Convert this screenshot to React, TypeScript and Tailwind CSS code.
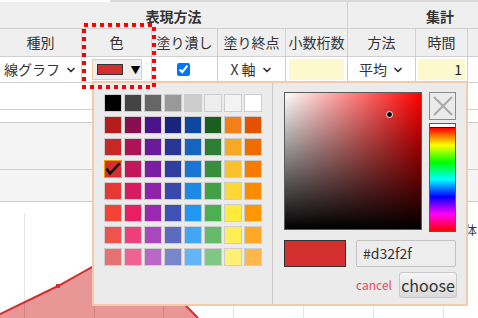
import { ChevronDown } from 'lucide-react'

const palette = [
  ['#000000', '#444444', '#666666', '#999999', '#cccccc', '#eeeeee', '#f3f3f3', '#ffffff'],
  ['#b71c1c', '#880e4f', '#4a148c', '#1a237e', '#0d47a1', '#1b5e20', '#f57f17', '#e65100'],
  ['#c62828', '#ad1457', '#6a1b9a', '#283593', '#1565c0', '#2e7d32', '#f9a825', '#ef6c00'],
  ['#d32f2f', '#c2185b', '#7b1fa2', '#303f9f', '#1976d2', '#388e3c', '#fbc02d', '#f57c00'],
  ['#e53935', '#d81b60', '#8e24aa', '#3949ab', '#1e88e5', '#43a047', '#fdd835', '#fb8c00'],
  ['#f44336', '#e91e63', '#9c27b0', '#3f51b5', '#2196f3', '#4caf50', '#ffeb3b', '#ff9800'],
  ['#ef5350', '#ec407a', '#ab47bc', '#5c6bc0', '#42a5f5', '#66bb6a', '#ffee58', '#ffa726'],
  ['#e57373', '#f06292', '#ba68c8', '#7986cb', '#64b5f6', '#81c784', '#fff176', '#ffb74d'],
]

const selected = '#d32f2f'

function SelectText({ label }: { label: string }) {
  return (
    <span className="flex items-center gap-[5px]">
      {label}
      <ChevronDown size={12} strokeWidth={3.5} />
    </span>
  )
}

function ColorPopup() {
  return (
    <div className="absolute left-[92px] top-[81px] w-[376px] h-[225px] border-2 border-[#f2ccaa] bg-[#ebebeb] flex">
      <div className="w-[179px] border-r border-[#c9c9c9] pl-[10px] pt-[11px]">
        <div className="grid grid-cols-[repeat(8,18px)] gap-x-[2px] gap-y-[4px]">
          {palette.flat().map((c, i) => {
            const isSel = c === selected && i > 8
            return (
              <div
                key={i}
                className={isSel ? 'w-[18px] h-[18px] border border-[#f5a000] relative' : 'w-[18px] h-[18px] border border-[#cdcdcd]'}
                style={{ backgroundColor: c }}
              >
                {isSel && (
                  <svg className="absolute inset-0" width="16" height="16" viewBox="0 0 16 16">
                    <path d="M1.5 7.5 L5 12.5 L14.5 2.5" fill="none" stroke="#000" strokeWidth="2.4" />
                  </svg>
                )}
              </div>
            )
          })}
        </div>
      </div>
      <div className="flex-1 pl-[11px] pt-[9px] flex flex-col">
        <div className="flex gap-[7px]">
          <div className="relative w-[138px] h-[138px] border border-[#5a5a5a] bg-[#ff0000]">
            <div className="absolute inset-0 bg-linear-to-r from-white to-white/0" />
            <div className="absolute inset-0 bg-linear-to-t from-black to-black/0" />
            <div className="absolute left-[101px] top-[18px] w-[7px] h-[7px] rounded-full bg-black border border-white" />
          </div>
          <div className="flex flex-col gap-[3px]">
            <div className="w-[27px] h-[28px] border border-[#8a8a8a] flex items-center justify-center">
              <svg width="22" height="22" viewBox="0 0 22 22">
                <path d="M2 2 L20 20 M20 2 L2 20" stroke="#a8a8a8" strokeWidth="2" />
              </svg>
            </div>
            <div className="w-[27px] h-[109px] border border-[#5a5a5a] flex flex-col">
              <div className="h-[4px] bg-white border-b border-[#222]" />
              <div className="flex-1 bg-[linear-gradient(to_bottom,#ff0000,#ffff00,#00ff00,#00ffff,#0000ff,#ff00ff,#ff0000)]" />
            </div>
          </div>
        </div>
        <div className="flex gap-[10px] mt-[8px]">
          <div className="w-[62px] h-[27px] bg-[#d32f2f] border border-[#333]" />
          <div className="w-[100px] h-[27px] border border-[#c2c2c2] rounded-[2px] bg-[#ededed] flex items-center pl-[6px] text-[14px] text-[#333]">
            #d32f2f
          </div>
        </div>
        <div className="flex items-center justify-end gap-[7px] mt-[5px] pr-[9px]">
          <span className="text-[12px] text-[#e5485c]">cancel</span>
          <div className="w-[58px] h-[26px] rounded-[3px] border border-[#c8c8c8] bg-linear-to-b from-[#f6f6f6] to-[#d9d9d9] flex items-center justify-center text-[16px] text-[#333] leading-none pb-[1px]">
            choose
          </div>
        </div>
      </div>
    </div>
  )
}

function Chart() {
  const grid = [24, 94, 163, 233, 303, 373, 443]
  return (
    <div className="relative h-[116px]">
      <svg className="absolute inset-0" width="478" height="116" viewBox="0 202 478 116">
        <path d="M0 314 L58 286 L128 247 L198 318 L198 320 L0 320 Z" fill="#e99696" />
        {grid.map(x => (
          <line key={x} x1={x + 0.5} y1={213} x2={x + 0.5} y2={318} stroke="#000" strokeOpacity="0.1" />
        ))}
        <path d="M0 314 L58 286 L128 247 L198 318" fill="none" stroke="#d32f2f" strokeWidth="2" />
        <rect x="56" y="284" width="4" height="4" fill="#d32f2f" />
      </svg>
      <span className="absolute left-[465px] top-[19px] text-[12px] text-[#333]">体</span>
    </div>
  )
}

export default function App() {
  const cell = 'border-r border-b border-[#cfcfcf] flex items-center justify-center'
  return (
    <div className="relative w-[478px] h-[318px] overflow-hidden bg-white text-[#333] font-['Noto_Sans_CJK_JP','Noto_Sans',sans-serif] text-[14px]">
      <div className="flex h-[2px]">
        <div className="w-[110px]" />
        <div className="flex-1 bg-[#d9d9d9]" />
      </div>
      <div className="grid grid-cols-[82px_70px_66px_68px_62px_68px_52px_64px] w-[532px]">
        <div className="col-span-5 h-[27px] bg-[#efefef] border-r border-b border-[#cfcfcf] flex items-center justify-center font-bold pt-[2px]">表現方法</div>
        <div className="col-span-3 h-[27px] bg-[#efefef] border-b border-[#cfcfcf] flex items-center justify-center font-bold pt-[2px]">集計</div>

        <div className={`${cell} h-[28px] bg-[#efefef]`}>種別</div>
        <div className={`${cell} h-[28px] bg-[#efefef]`}>色</div>
        <div className={`${cell} h-[28px] bg-[#efefef]`}>塗り潰し</div>
        <div className={`${cell} h-[28px] bg-[#efefef]`}>塗り終点</div>
        <div className={`${cell} h-[28px] bg-[#efefef]`}>小数桁数</div>
        <div className={`${cell} h-[28px] bg-[#efefef]`}>方法</div>
        <div className={`${cell} h-[28px] bg-[#efefef]`}>時間</div>
        <div className={`${cell} h-[28px] bg-[#efefef]`} />

        <div className={`${cell} h-[26px]`}><SelectText label="線グラフ" /></div>
        <div className={`${cell} h-[26px]`}>
          <div className="w-[50px] h-[21px] border border-[#efc9a6] bg-[#eeeeee] flex items-center pl-[4px] gap-[8px]">
            <div className="w-[27px] h-[11px] bg-[#d32f2f] border border-[#333]" />
            <span className="text-[10px] text-black leading-none">▼</span>
          </div>
        </div>
        <div className={`${cell} h-[26px]`}>
          <input type="checkbox" checked readOnly className="w-[13px] h-[13px] accent-[#0075ff] ml-[-3px]" />
        </div>
        <div className={`${cell} h-[26px]`}><SelectText label="X 軸" /></div>
        <div className={`${cell} h-[26px] px-[3px]`}>
          <div className="w-full h-[21px] bg-[#fcf9cf]" />
        </div>
        <div className={`${cell} h-[26px]`}><SelectText label="平均" /></div>
        <div className={`${cell} h-[26px] px-[2px]`}>
          <div className="w-full h-[21px] bg-[#fcf9cf] flex items-center justify-end pr-[3px] text-[#222]">1</div>
        </div>
        <div className={`${cell} h-[26px]`} />
      </div>

      <div className="h-[27px] border-b border-[#cfcfcf]" />
      <div className="h-[13px] border-b border-[#cfcfcf]" />
      <div className="h-[47px] border-b border-[#cfcfcf] bg-[#f4f4f4]" />
      <div className="h-[32px] border-b border-[#cfcfcf] bg-[#f4f4f4]" />
      <Chart />

      <ColorPopup />

      <svg className="absolute left-[82px] top-[23px]" width="74" height="66" viewBox="0 0 74 66">
        <rect x="2" y="2" width="70" height="62" fill="none" stroke="#ff0000" strokeWidth="4" strokeDasharray="4 4" />
      </svg>
    </div>
  )
}
